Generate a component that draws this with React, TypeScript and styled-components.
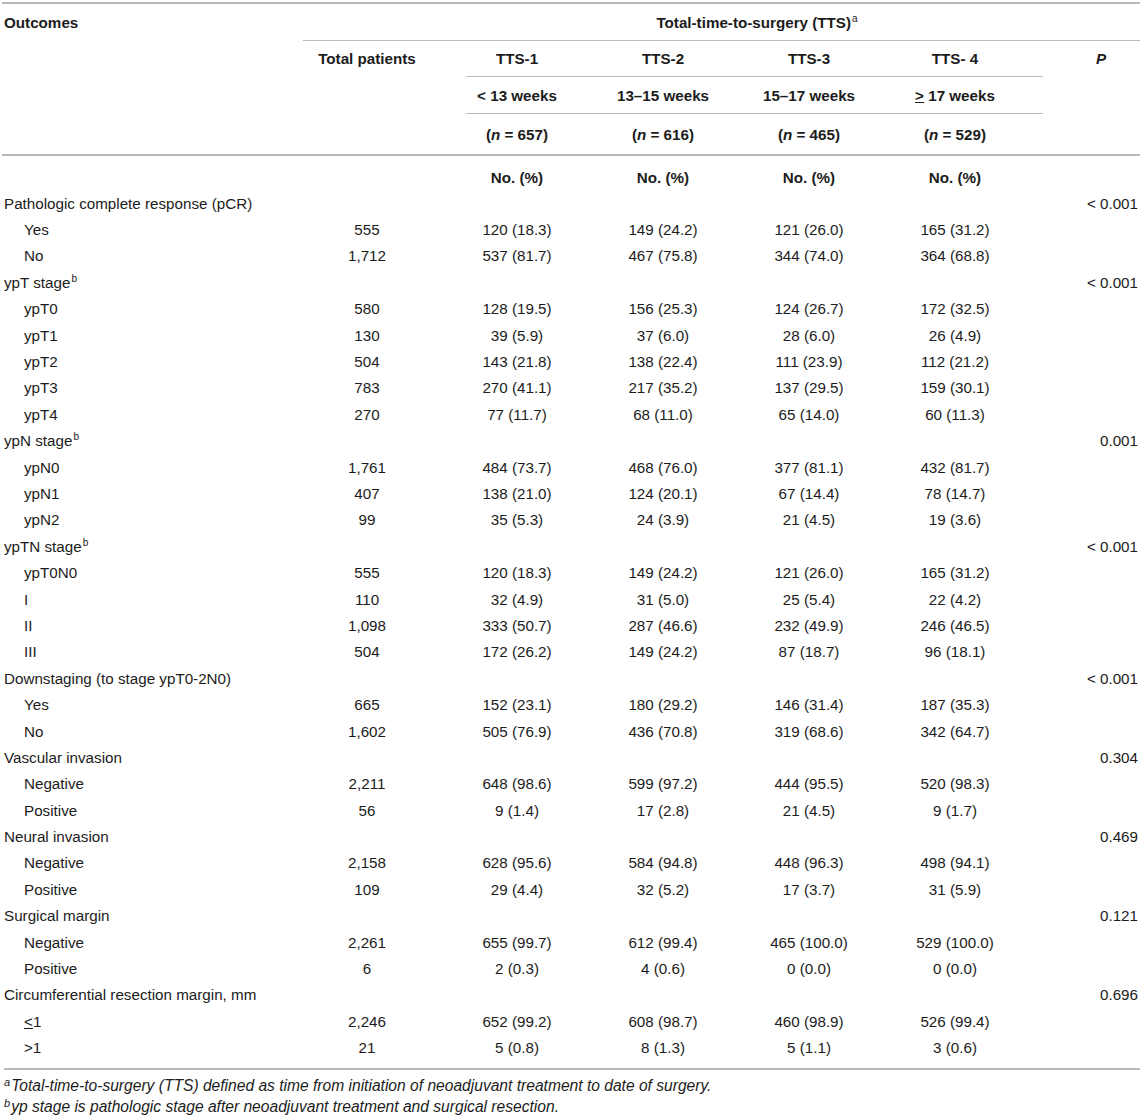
import React from "react";
import styled, { createGlobalStyle } from "styled-components";

const Global = createGlobalStyle`
  html, body { margin: 0; padding: 0; background: #fff; }
  body {
    font-family: "Liberation Sans", Arial, Helvetica, sans-serif;
    color: #1c1c1c;
    -webkit-font-smoothing: antialiased;
  }
`;

const COLS = "301px 141px 146px 146px 146px 146px 112px";

const Page = styled.div`
  width: 1138px;
  padding: 2px 0 0 2px;
`;

const Rule = styled.div<{ $thick?: boolean; $left?: number; $width?: number }>`
  height: ${(p) => (p.$thick ? 2 : 1)}px;
  background: ${(p) => (p.$thick ? "#b8b8b8" : "#bcbcbc")};
  margin-left: ${(p) => p.$left ?? 0}px;
  width: ${(p) => (p.$width ? `${p.$width}px` : "auto")};
`;

const HeadRow = styled.div<{ $h: number; $pt?: number }>`
  display: grid;
  grid-template-columns: ${COLS};
  height: ${(p) => p.$h}px;
  padding-top: ${(p) => p.$pt ?? 0}px;
  box-sizing: border-box;
  align-items: ${(p) => (p.$pt ? "start" : "center")};
  font-weight: bold;
  font-size: 15.2px;
  line-height: 17px;
`;

const HCell = styled.div<{ $span?: string; $pl?: number; $pr?: number; $left?: boolean }>`
  grid-column: ${(p) => p.$span ?? "auto"};
  text-align: ${(p) => (p.$left ? "left" : "center")};
  padding-left: ${(p) => p.$pl ?? 0}px;
  padding-right: ${(p) => p.$pr ?? 0}px;
  white-space: nowrap;
`;

const Sup = styled.sup`
  font-size: 10px;
  line-height: 0;
  vertical-align: 6px;
  font-weight: normal;
  margin-left: 1px;
`;

const Ital = styled.i`
  font-style: italic;
`;

const Body = styled.div`
  display: flex;
  flex-direction: column;
`;

const DataRow = styled.div`
  display: grid;
  grid-template-columns: ${COLS};
  height: 26.4px;
  align-items: center;
  font-size: 15.2px;
  line-height: 17px;
`;

const Label = styled.div<{ $indent?: boolean }>`
  padding-left: ${(p) => (p.$indent ? 22 : 2)}px;
  white-space: nowrap;
`;

const Num = styled.div<{ $pr?: number }>`
  text-align: center;
  padding-right: ${(p) => p.$pr ?? 0}px;
  white-space: nowrap;
`;

const PVal = styled.div`
  text-align: right;
  padding-right: 2px;
  white-space: nowrap;
`;

const Notes = styled.div`
  margin-top: 7px;
  font-size: 15.6px;
  line-height: 21px;
  font-style: italic;
  padding-left: 2px;
`;

const NoteText = styled.div`
  padding-top: 5px;
`;

const Note = styled.div`
  white-space: nowrap;
`;

const NoteSup = styled.sup`
  font-size: 11px;
  line-height: 0;
  vertical-align: 5px;
  margin-right: 1px;
`;

type Row = {
  label: React.ReactNode;
  indent?: boolean;
  total?: string;
  v?: string[];
  p?: string;
};

const rows: Row[] = [
  { label: "Pathologic complete response (pCR)", p: "< 0.001" },
  { label: "Yes", indent: true, total: "555", v: ["120 (18.3)", "149 (24.2)", "121 (26.0)", "165 (31.2)"] },
  { label: "No", indent: true, total: "1,712", v: ["537 (81.7)", "467 (75.8)", "344 (74.0)", "364 (68.8)"] },
  { label: <>ypT stage<Sup>b</Sup></>, p: "< 0.001" },
  { label: "ypT0", indent: true, total: "580", v: ["128 (19.5)", "156 (25.3)", "124 (26.7)", "172 (32.5)"] },
  { label: "ypT1", indent: true, total: "130", v: ["39 (5.9)", "37 (6.0)", "28 (6.0)", "26 (4.9)"] },
  { label: "ypT2", indent: true, total: "504", v: ["143 (21.8)", "138 (22.4)", "111 (23.9)", "112 (21.2)"] },
  { label: "ypT3", indent: true, total: "783", v: ["270 (41.1)", "217 (35.2)", "137 (29.5)", "159 (30.1)"] },
  { label: "ypT4", indent: true, total: "270", v: ["77 (11.7)", "68 (11.0)", "65 (14.0)", "60 (11.3)"] },
  { label: <>ypN stage<Sup>b</Sup></>, p: "0.001" },
  { label: "ypN0", indent: true, total: "1,761", v: ["484 (73.7)", "468 (76.0)", "377 (81.1)", "432 (81.7)"] },
  { label: "ypN1", indent: true, total: "407", v: ["138 (21.0)", "124 (20.1)", "67 (14.4)", "78 (14.7)"] },
  { label: "ypN2", indent: true, total: "99", v: ["35 (5.3)", "24 (3.9)", "21 (4.5)", "19 (3.6)"] },
  { label: <>ypTN stage<Sup>b</Sup></>, p: "< 0.001" },
  { label: "ypT0N0", indent: true, total: "555", v: ["120 (18.3)", "149 (24.2)", "121 (26.0)", "165 (31.2)"] },
  { label: "I", indent: true, total: "110", v: ["32 (4.9)", "31 (5.0)", "25 (5.4)", "22 (4.2)"] },
  { label: "II", indent: true, total: "1,098", v: ["333 (50.7)", "287 (46.6)", "232 (49.9)", "246 (46.5)"] },
  { label: "III", indent: true, total: "504", v: ["172 (26.2)", "149 (24.2)", "87 (18.7)", "96 (18.1)"] },
  { label: "Downstaging (to stage ypT0-2N0)", p: "< 0.001" },
  { label: "Yes", indent: true, total: "665", v: ["152 (23.1)", "180 (29.2)", "146 (31.4)", "187 (35.3)"] },
  { label: "No", indent: true, total: "1,602", v: ["505 (76.9)", "436 (70.8)", "319 (68.6)", "342 (64.7)"] },
  { label: "Vascular invasion", p: "0.304" },
  { label: "Negative", indent: true, total: "2,211", v: ["648 (98.6)", "599 (97.2)", "444 (95.5)", "520 (98.3)"] },
  { label: "Positive", indent: true, total: "56", v: ["9 (1.4)", "17 (2.8)", "21 (4.5)", "9 (1.7)"] },
  { label: "Neural invasion", p: "0.469" },
  { label: "Negative", indent: true, total: "2,158", v: ["628 (95.6)", "584 (94.8)", "448 (96.3)", "498 (94.1)"] },
  { label: "Positive", indent: true, total: "109", v: ["29 (4.4)", "32 (5.2)", "17 (3.7)", "31 (5.9)"] },
  { label: "Surgical margin", p: "0.121" },
  { label: "Negative", indent: true, total: "2,261", v: ["655 (99.7)", "612 (99.4)", "465 (100.0)", "529 (100.0)"] },
  { label: "Positive", indent: true, total: "6", v: ["2 (0.3)", "4 (0.6)", "0 (0.0)", "0 (0.0)"] },
  { label: "Circumferential resection margin, mm", p: "0.696" },
  { label: <><u>&lt;</u>1</>, indent: true, total: "2,246", v: ["652 (99.2)", "608 (98.7)", "460 (98.9)", "526 (99.4)"] },
  { label: ">1", indent: true, total: "21", v: ["5 (0.8)", "8 (1.3)", "5 (1.1)", "3 (0.6)"] },
];

export default function App() {
  return (
    <>
      <Global />
      <Page>
        <Rule $thick />
        <HeadRow $h={36}>
          <HCell $left $pl={2}>Outcomes</HCell>
          <HCell $span="3 / 7" $pl={42}>
            Total-time-to-surgery (TTS)<Sup>a</Sup>
          </HCell>
        </HeadRow>
        <Rule $left={301} />
        <HeadRow $h={35}>
          <HCell $span="2 / 3" $pr={13}>Total patients</HCell>
          <HCell>TTS-1</HCell>
          <HCell>TTS-2</HCell>
          <HCell>TTS-3</HCell>
          <HCell>TTS- 4</HCell>
          <HCell $pl={34}>
            <Ital>P</Ital>
          </HCell>
        </HeadRow>
        <Rule $left={464} $width={577} />
        <HeadRow $h={36}>
          <HCell $span="3 / 4">&lt; 13 weeks</HCell>
          <HCell>13–15 weeks</HCell>
          <HCell>15–17 weeks</HCell>
          <HCell>
            <u>&gt;</u> 17 weeks
          </HCell>
        </HeadRow>
        <Rule $left={464} $width={577} />
        <HeadRow $h={40}>
          <HCell $span="3 / 4">(<Ital>n</Ital> = 657)</HCell>
          <HCell>(<Ital>n</Ital> = 616)</HCell>
          <HCell>(<Ital>n</Ital> = 465)</HCell>
          <HCell>(<Ital>n</Ital> = 529)</HCell>
        </HeadRow>
        <Rule $thick />
        <HeadRow $h={34} $pt={13}>
          <HCell $span="3 / 4">No. (%)</HCell>
          <HCell>No. (%)</HCell>
          <HCell>No. (%)</HCell>
          <HCell>No. (%)</HCell>
        </HeadRow>
        <Body>
          {rows.map((r, i) => (
            <DataRow key={i}>
              <Label $indent={r.indent}>{r.label}</Label>
              <Num $pr={13}>{r.total ?? ""}</Num>
              {(r.v ?? ["", "", "", ""]).map((x, j) => (
                <Num key={j}>{x}</Num>
              ))}
              <PVal>{r.p ?? ""}</PVal>
            </DataRow>
          ))}
        </Body>
        <Notes>
          <Rule $thick />
          <NoteText>
            <Note>
              <NoteSup>a</NoteSup>Total-time-to-surgery (TTS) defined as time from initiation of neoadjuvant treatment to date of surgery.
            </Note>
            <Note>
              <NoteSup>b</NoteSup>yp stage is pathologic stage after neoadjuvant treatment and surgical resection.
            </Note>
          </NoteText>
        </Notes>
      </Page>
    </>
  );
}
